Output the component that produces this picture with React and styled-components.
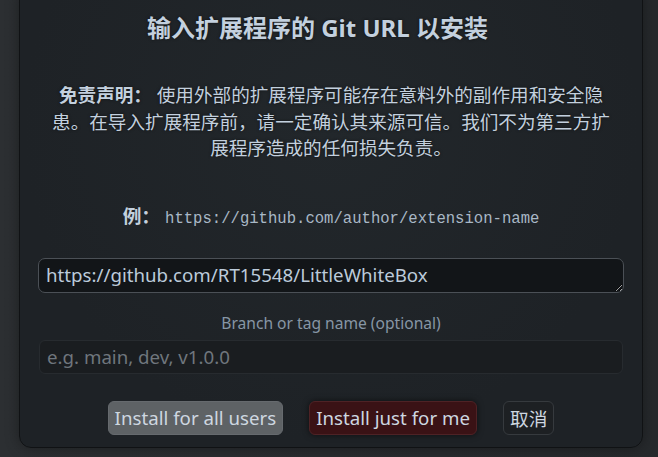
import React from "react";
import styled, { createGlobalStyle } from "styled-components";

const colors = {
  page: "#2a2d30",
  dialog: "#1e2226",
  text: "#c3d0de",
  muted: "#8796a5",
  placeholder: "#6f767d",
};

const GlobalStyle = createGlobalStyle`
  html, body {
    margin: 0;
    height: 100%;
    background: linear-gradient(90deg, #2c2f32 0%, #26292c 100%);
    overflow: hidden;
  }
  body {
    font-family: "Noto Sans", "Noto Sans CJK SC", sans-serif;
  }
`;

const Page = styled.div`
  display: flex;
  justify-content: center;
  padding: 0 15px 0 19px;
`;

const Dialog = styled.div`
  box-sizing: border-box;
  width: 624px;
  margin-top: -12px;
  padding: 24px 18px 12px;
  background: radial-gradient(ellipse at 50% 30%, #22272b 0%, ${colors.dialog} 70%);
  border: 1px solid #101214;
  border-radius: 12px;
  box-shadow: 0 0 14px rgba(0, 0, 0, 0.35);
  display: flex;
  flex-direction: column;
  align-items: stretch;
`;

const Title = styled.h3`
  margin: 0;
  padding-right: 27px;
  font-size: 24px;
  line-height: 29px;
  font-weight: 700;
  text-align: center;
  color: ${colors.text};
  text-shadow: 0 0 3px rgba(0, 0, 0, 0.6);
`;

const Disclaimer = styled.p`
  margin: 40px 10px 0;
  font-size: 18.6px;
  line-height: 26.5px;
  text-align: center;
  color: ${colors.text};
  text-shadow: 0 0 3px rgba(0, 0, 0, 0.6);

  b {
    font-weight: 700;
  }
`;

const Example = styled.div`
  margin-top: 41px;
  display: flex;
  justify-content: center;
  align-items: baseline;
  gap: 5px;
  line-height: 26px;
  color: ${colors.text};
`;

const ExampleLabel = styled.span`
  font-size: 18.7px;
  font-weight: 700;
`;

const Code = styled.code`
  font-family: "Liberation Mono", "DejaVu Sans Mono", monospace;
  font-size: 15.6px;
  color: #a9b8c6;
`;

const UrlBox = styled.textarea`
  box-sizing: border-box;
  margin-top: 26px;
  height: 35px;
  width: 100%;
  padding: 4px 7px;
  font-family: "Noto Sans", sans-serif;
  font-size: 18.7px;
  line-height: 24px;
  color: #bccbdb;
  background: #121518;
  border: 1px solid #4b5056;
  border-radius: 7px;
  resize: vertical;
  outline: none;
`;

const Label = styled.label`
  margin-top: 20px;
  font-size: 15.6px;
  line-height: 20px;
  text-align: center;
  color: ${colors.muted};
`;

const BranchInput = styled.input`
  box-sizing: border-box;
  margin: 7px 1px 0;
  height: 34px;
  padding: 0 7px;
  font-family: "Noto Sans", sans-serif;
  font-size: 18.7px;
  color: ${colors.text};
  background: #1a1d20;
  border: 1px solid #272b2f;
  border-radius: 6px;
  outline: none;

  &::placeholder {
    color: ${colors.placeholder};
  }
`;

const Buttons = styled.div`
  margin-top: 27px;
  display: flex;
  justify-content: center;
  gap: 26px;
`;

const variants = {
  grey: { bg: "#5e6265", border: "#666a6e", shadow: "none" },
  red: { bg: "#3a1215", border: "#4e2225", shadow: "0 0 6px rgba(0,0,0,0.6)" },
  plain: { bg: "#1d2023", border: "#363a3e", shadow: "none" },
};

const Button = styled.button`
  box-sizing: border-box;
  height: 34px;
  padding: 0 6px;
  font-family: "Noto Sans", "Noto Sans CJK SC", sans-serif;
  font-size: 18.7px;
  color: #ced7e0;
  background: ${(p) => variants[p.$variant].bg};
  border: 1px solid ${(p) => variants[p.$variant].border};
  border-radius: 6px;
  box-shadow: ${(p) => variants[p.$variant].shadow};
  cursor: pointer;
`;

const App = () => {
  return (
    <>
      <GlobalStyle />
      <Page>
        <Dialog>
          <Title>输入扩展程序的 Git URL 以安装</Title>
          <Disclaimer>
            <b>免责声明：</b> 使用外部的扩展程序可能存在意料外的副作用和安全隐患。在导入扩展程序前，请一定确认其来源可信。我们不为第三方扩展程序造成的任何损失负责。
          </Disclaimer>
          <Example>
            <ExampleLabel>例：</ExampleLabel>
            <Code>https://github.com/author/extension-name</Code>
          </Example>
          <UrlBox defaultValue="https://github.com/RT15548/LittleWhiteBox" rows={1} />
          <Label htmlFor="branch">Branch or tag name (optional)</Label>
          <BranchInput id="branch" placeholder="e.g. main, dev, v1.0.0" />
          <Buttons>
            <Button $variant="grey">Install for all users</Button>
            <Button $variant="red">Install just for me</Button>
            <Button $variant="plain">取消</Button>
          </Buttons>
        </Dialog>
      </Page>
    </>
  );
};

export default App;
